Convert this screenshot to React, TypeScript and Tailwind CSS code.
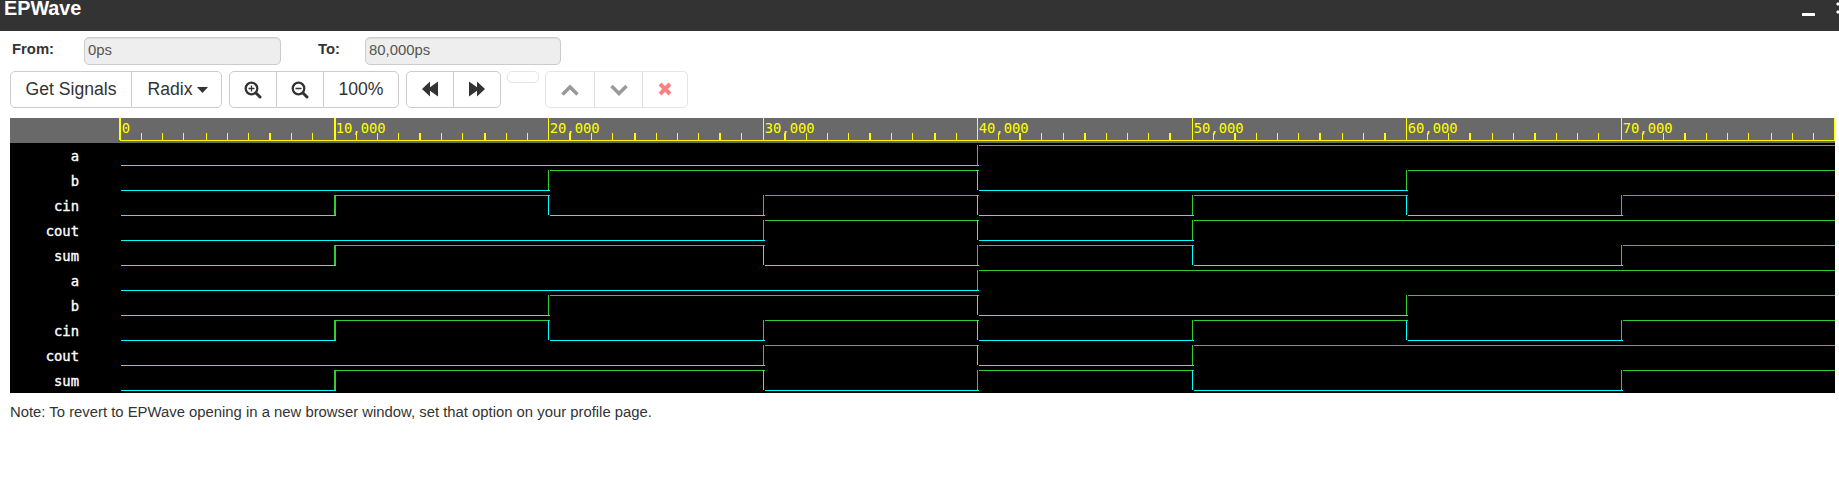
import React from "react";

const edges = [120, 334, 548, 763, 977, 1192, 1406, 1621, 1834];
const majors = edges.slice(0, 8);
const minors = [
  141, 162, 183, 206, 227, 248, 291, 312,
  356, 377, 398, 441, 462, 506, 527,
  591, 612, 656, 677, 698, 741,
  806, 827, 848, 891, 912, 956,
  998, 1041, 1063, 1106, 1127, 1148,
  1213, 1256, 1277, 1298, 1342, 1363,
  1427, 1448, 1492, 1513, 1556, 1577, 1598,
  1642, 1663, 1706, 1727, 1748, 1771, 1792, 1813,
];
const wideMinors = [269, 419, 484, 569, 634, 719, 784, 869, 934, 1019, 1084, 1169, 1234, 1319, 1384, 1469, 1534, 1684];

const waves: Record<string, number[]> = {
  a: [0, 0, 0, 0, 1, 1, 1, 1],
  b: [0, 0, 1, 1, 0, 0, 1, 1],
  cin: [0, 1, 0, 1, 0, 1, 0, 1],
  cout: [0, 0, 0, 1, 0, 1, 1, 1],
  sum: [0, 1, 1, 0, 1, 0, 0, 1],
};
const names = ["a", "b", "cin", "cout", "sum", "a", "b", "cin", "cout", "sum"];

function Wave({ bits }: { bits: number[] }) {
  return (
    <svg className="block shrink-0" width="1715" height="25" shapeRendering="crispEdges">
      {bits.map((b, i) => {
        const x = edges[i] - 120 + (i ? 2 : 1);
        const end = i === 7 ? 1715 : edges[i + 1] - 120 + 2;
        return <rect key={i} x={x} y={b ? 2 : 22} width={end - x} height="1" fill={b ? "#32cd32" : "#0ff"} />;
      })}
      {bits.map((b, i) =>
        i > 0 && b !== bits[i - 1] ? (
          <rect key={i} x={edges[i] - 120} y="2" width={i === 1 ? 2 : 1} height="20" fill={b ? "#32cd32" : "#0ff"} />
        ) : null
      )}
    </svg>
  );
}

function Ruler() {
  return (
    <svg className="block" width="1825" height="25">
      <rect width="1825" height="25" fill="#696969" />
      <g fill="#ff0" shapeRendering="crispEdges">
        <rect x="110" y="22" width="1715" height="1" />
        {majors.map((m, i) => (
          <rect key={m} x={m - 10 - (i === 0 ? 1 : 0)} y="0" width={i < 2 ? 2 : 1} height="22" />
        ))}
        <rect x="1824" y="0" width="1" height="22" />
        {minors.map((m) => (
          <rect key={m} x={m - 10} y="15" width="1" height="7" />
        ))}
        {wideMinors.map((m) => (
          <rect key={m} x={m - 10} y="15" width="2" height="7" />
        ))}
      </g>
      {majors.map((m, i) => (
        <text
          key={m}
          x={m - 8.3}
          y="15"
          fill="#ff0"
          className="font-['DejaVu_Sans_Mono',monospace] text-[13.85px] [-webkit-text-stroke:0.2px_#ff0]"
        >
          {i === 0 ? "0" : `${i}0,000`}
        </text>
      ))}
    </svg>
  );
}

const group = "flex h-[37px] overflow-hidden rounded-[5px] border border-[#ccc] bg-white";
const cell = "flex items-center justify-center";
const div = "border-r border-[#ccc]";
const field =
  "h-[28px] rounded-[5px] border border-[#ccc] bg-[#eee] pl-[3px] leading-[25px] text-[#555] shadow-[inset_0_1px_1px_rgba(0,0,0,0.075)]";

export default function App() {
  return (
    <div className="h-[487px] w-[1839px] overflow-hidden bg-white font-['Liberation_Sans',Arial,sans-serif] text-[#333]">
      <header className="flex h-[31px] justify-between bg-[#333]">
        <h1 className="-mt-[4px] pl-[4px] text-[19.8px] font-bold leading-[24px] text-white">EPWave</h1>
        <svg width="40" height="31" fill="#fff">
          <rect x="3" y="13" width="13" height="3" rx=".5" />
          <path d="M37 4l2-2 2 2-2 2zM37 12l2-2 2 2-2 2z" />
        </svg>
      </header>
      <div className="flex h-[40px] pt-[6px] text-[14.85px]">
        <b className="w-[84px] pl-[12px] leading-[25px]">From:</b>
        <div className={`${field} w-[197px]`}>0ps</div>
        <b className="w-[84px] pl-[37px] leading-[25px]">To:</b>
        <div className={`${field} w-[196px]`}>80,000ps</div>
      </div>
      <div className="flex h-[47px] pl-[10px] text-[17.6px]">
        <div className={`${group} w-[212px]`}>
          <div className={`${cell} ${div} w-[121px] pb-px`}>Get Signals</div>
          <div className={`${cell} flex-1 gap-[5px] pb-px pl-[3px]`}>
            Radix
            <svg className="shrink-0" width="11" height="7" fill="#333">
              <path d="M0 1h11L5.5 7z" />
            </svg>
          </div>
        </div>
        <div className={`${group} ml-[7px] w-[170px]`}>
          {[true, false].map((plus) => (
            <div key={String(plus)} className={`${cell} ${div} w-[47px]`}>
              <svg width="18" height="18" fill="none" stroke="#333">
                <circle cx="7.5" cy="7.500" r="5.800" strokeWidth="2.300" />
                <path d="M12 12l4 4" strokeWidth="3" strokeLinecap="round" />
                <path d={plus ? "M4.5 7.5h6M7.5 4.5v6" : "M4.5 7.5h6"} strokeWidth="1.300" />
              </svg>
            </div>
          ))}
          <div className={`${cell} flex-1 pb-px`}>100%</div>
        </div>
        <div className={`${group} ml-[7px] w-[95px]`}>
          <div className={`${cell} ${div} w-[47px] pb-[2px]`}>
            <svg width="16" height="16" fill="#333">
              <path d="M0 8l8-7.500v5.800L16 .5v15L8 9.700v5.800z" />
            </svg>
          </div>
          <div className={`${cell} flex-1 pb-[2px] pr-px`}>
            <svg width="16" height="16" fill="#333">
              <path d="M16 8L8 .5v5.800L0 .5v15l8-5.800v5.800z" />
            </svg>
          </div>
        </div>
        <div className="ml-[6px] h-[12px] w-[32px] rounded-[5px] border border-[#e5e5e5]" />
        <div className="ml-[6px] flex h-[37px] w-[143px] rounded-[5px] border border-[#e5e5e5]">
          <div className={`${cell} w-[49px] border-r border-[#e0e0e0]`}>
            <svg width="18" height="12" fill="none" stroke="#999" strokeWidth="3.5">
              <path d="M1.500 10.500L9 3l7.500 7.500" />
            </svg>
          </div>
          <div className={`${cell} w-[48px] border-r border-[#e0e0e0]`}>
            <svg width="18" height="12" fill="none" stroke="#999" strokeWidth="3.5">
              <path d="M1.500 2L9 9.500 16.500 2" />
            </svg>
          </div>
          <div className={`${cell} flex-1 pb-px`}>
            <svg width="14" height="14" fill="none" stroke="#ff8080" strokeWidth="4">
              <path d="M2 2l10 10M12 2L2 12" />
            </svg>
          </div>
        </div>
      </div>
      <main className="ml-[10px] w-[1825px] bg-black">
        <Ruler />
        {names.map((n, i) => (
          <div key={i} className="flex h-[25px]">
            <div className="w-[110px] pr-[41px] text-right font-['DejaVu_Sans_Mono',monospace] text-[13.85px] leading-[27px] text-white [-webkit-text-stroke:0.35px_#fff]">
              {n}
            </div>
            <Wave bits={waves[n]} />
          </div>
        ))}
      </main>
      <p className="pl-[10px] pt-[9px] text-[14.85px] leading-[20px]">
        Note: To revert to EPWave opening in a new browser window, set that option on your profile page.
      </p>
    </div>
  );
}
